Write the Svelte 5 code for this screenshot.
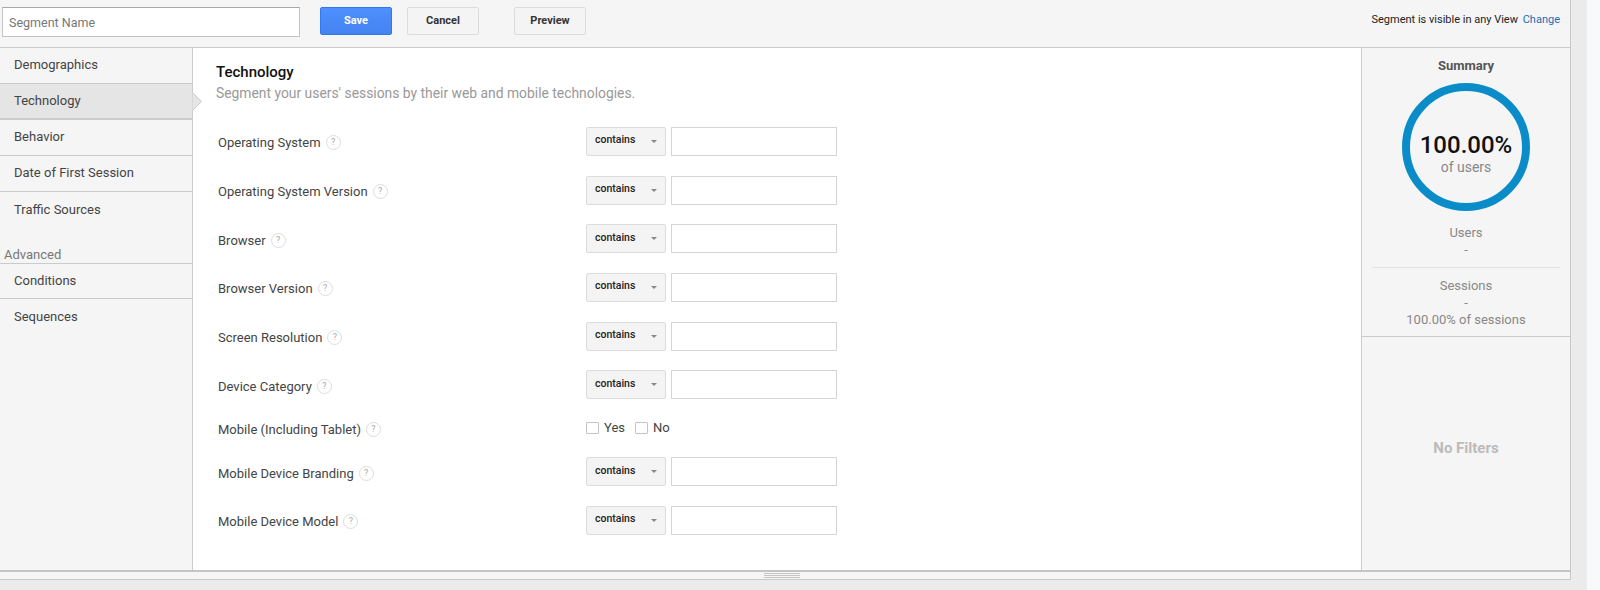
<script>
  const nav = ['Demographics', 'Technology', 'Behavior', 'Date of First Session', 'Traffic Sources'];
  const rows = [
    { label: 'Operating System' },
    { label: 'Operating System Version' },
    { label: 'Browser' },
    { label: 'Browser Version' },
    { label: 'Screen Resolution' },
    { label: 'Device Category' },
    { label: 'Mobile (Including Tablet)', check: true },
    { label: 'Mobile Device Branding' },
    { label: 'Mobile Device Model' }
  ];
</script>

<div class="page">
  <div class="panel">
    <header class="top">
      <input class="name" placeholder="Segment Name" />
      <button class="btn save">Save</button>
      <button class="btn cancel">Cancel</button>
      <button class="btn preview">Preview</button>
      <div class="vis">Segment is visible in any View <a href="#change">Change</a></div>
    </header>
    <div class="body">
      <nav class="side">
        {#each nav as n}
          <div class="item" class:active={n === 'Technology'}>
            {n}
            {#if n === 'Technology'}
              <svg class="arrow" width="12" height="19" viewBox="0 0 12 19"><path d="M1.5 .5 L10.5 9.5 L1.5 18.5 Z" fill="#e5e5e5" stroke="none" /><path d="M1.5 .5 L10.5 9.5 L1.5 18.5" fill="none" stroke="#cbcbcb" /></svg>
            {/if}
          </div>
        {/each}
        <div class="adv">Advanced</div>
        <div class="item first">Conditions</div>
        <div class="item plain">Sequences</div>
      </nav>
      <main class="main">
        <h1>Technology</h1>
        <p class="sub">Segment your users' sessions by their web and mobile technologies.</p>
        <div class="form">
          {#each rows as r}
            <div class="row" class:short={r.check}>
              <div class="label">{r.label} <span class="q">?</span></div>
              {#if r.check}
                <div class="checks">
                  <span class="box"></span><span class="opt">Yes</span>
                  <span class="box"></span><span class="opt">No</span>
                </div>
              {:else}
                <div class="sel">contains<span class="caret"></span></div>
                <div class="val"></div>
              {/if}
            </div>
          {/each}
        </div>
      </main>
      <aside class="summary">
        <div class="stats">
          <div class="s-title">Summary</div>
          <div class="ring">
            <div class="pct">100.00%</div>
            <div class="of">of users</div>
          </div>
          <div class="stat s1">Users<br />-</div>
          <div class="stat s2">Sessions<br />-<br />100.00% of sessions</div>
        </div>
        <div class="nofilters">No Filters</div>
      </aside>
    </div>
    <footer class="strip"><span class="handle"></span></footer>
  </div>
  <div class="gutter"></div>
</div>

<style>
  :global(body) { margin: 0; background: #ebebeb; }
  .page { display: flex; height: 590px; overflow: hidden; font-family: Roboto, "Liberation Sans", sans-serif; font-size: 13px; color: #333; background: #ebebeb; }
  .panel { width: 1570px; height: 580px; box-sizing: content-box; border-right: 1px solid #c8c8c8; background: #f5f5f5; display: flex; flex-direction: column; flex: none; }
  .gutter { width: 16px; flex: none; }
  .page::after { content: ""; flex: 1; background: #f8f9fb; }

  .top { height: 48px; flex: none; box-sizing: border-box; border-bottom: 1px solid #cbcbcb; display: flex; align-items: flex-start; padding: 7px 0 0 2px; }
  .name { height: 28px; box-sizing: content-box; border: 1px solid #c4c4c4; border-top-color: #a8a8a8; padding: 0 4px 0 6px; margin: 0; font: 12.5px Roboto, sans-serif; outline: none; background: #fff; flex: none; width: 286px; }
  .name::placeholder { color: #777; opacity: 1; }
  .btn { height: 28px; width: 72px; box-sizing: border-box; border: 1px solid #dcdcdc; border-radius: 2px; background: #f4f4f4; font: 700 11px Roboto, sans-serif; color: #333; padding: 0 0 2px; flex: none; }
  .save { margin-left: 20px; background: linear-gradient(#4d90fe, #4583f0); border-color: #3079ed; color: #fff; }
  .cancel { margin-left: 15px; }
  .preview { margin-left: 35px; }
  .vis { margin-left: auto; padding: 6px 10px 0 0; font-size: 11px; color: #222; }
  .vis a { color: #1a6fb5; text-decoration: none; margin-left: 2px; }

  .body { flex: 1; display: flex; min-height: 0; }
  .side { width: 192px; flex: none; border-right: 1px solid #cbcbcb; box-sizing: content-box; }
  .item { height: 36px; box-sizing: border-box; border-bottom: 1px solid #cbcbcb; padding: 0 0 2px 14px; display: flex; align-items: center; position: relative; color: #444; font-size: 13px; }
  .item:nth-child(5) { border-bottom: 0; }
  .active { background: #e5e5e5; border-bottom-width: 2px; }
  .arrow { position: absolute; right: -11px; top: 8px; }
  .adv { height: 35px; box-sizing: border-box; padding: 19px 0 0 4px; color: #777; font-size: 13px; line-height: 16px; }
  .first { border-top: 1px solid #cbcbcb; }
  .plain { border-bottom: 0; }

  .main { flex: 1; background: #fff; padding: 14px 0 0 23px; min-width: 0; }
  h1 { margin: 0; font: 500 15px/20px Roboto, sans-serif; color: #111; }
  .sub { margin: 1px 0 0; font-size: 13.86px; line-height: 20px; color: #999; }
  .form { margin-top: 14px; }
  .row { height: 48.7px; display: flex; align-items: center; padding-left: 2px; }
  .short { height: 38.3px; }
  .label { width: 368px; flex: none; display: flex; align-items: center; gap: 5px; color: #444; padding-top: 3px; }
  .q { width: 13px; height: 13px; border: 1px solid #ddd; border-radius: 50%; font-size: 9px; line-height: 13px; text-align: center; color: #aaa; }
  .sel { width: 80px; height: 29px; box-sizing: border-box; background: #f4f4f4; border: 1px solid #dcdcdc; border-radius: 2px; font-weight: 500; font-size: 10.5px; color: #222; padding: 0 0 3px 8px; display: flex; align-items: center; position: relative; }
  .caret { position: absolute; left: 64px; top: 12px; border: 3px solid transparent; border-top: 3px solid #888; border-bottom: 0; }
  .val { width: 166px; height: 29px; box-sizing: border-box; margin-left: 5px; border: 1px solid #d5d5d5; background: #fff; }
  .checks { display: flex; align-items: center; padding-bottom: 1px; }
  .box { width: 13px; height: 12px; box-sizing: border-box; border: 1px solid #c4c4c4; border-radius: 1px; background: #fff; margin-right: 5px; }
  .opt { margin-right: 10px; color: #444; }

  .summary { width: 208px; flex: none; border-left: 1px solid #cbcbcb; display: flex; flex-direction: column; }
  .stats { height: 289px; flex: none; box-sizing: border-box; border-bottom: 1px solid #cbcbcb; padding-top: 9px; text-align: center; }
  .s-title { font: 700 13px/18px Roboto, sans-serif; color: #555; }
  .ring { width: 128px; height: 128px; box-sizing: border-box; border: 8px solid #0a8cc8; border-radius: 50%; margin: 8px auto 0; display: flex; flex-direction: column; justify-content: center; padding-top: 13px; }
  .pct { font: 500 24px/26px Roboto, sans-serif; color: #111; margin: 0 -3px; }
  .of { font-size: 14px; line-height: 18px; color: #888; }
  .stat { color: #888; font-size: 13px; line-height: 17px; margin: 0 10px; }
  .s1 { padding: 13px 0 9px; border-bottom: 1px solid #e3e3e3; }
  .s2 { padding-top: 9px; }
  .nofilters { flex: 1; display: flex; align-items: center; justify-content: center; font: 700 15px Roboto, sans-serif; color: #bbb; padding-bottom: 12px; }

  .strip { height: 7px; flex: none; border-top: 2px solid #c4c4c4; border-bottom: 1px solid #c8c8c8; display: flex; justify-content: center; align-items: center; position: relative; }
  .handle { width: 36px; height: 5px; margin-left: -7px; border-top: 1px solid #c4c4c4; border-bottom: 1px solid #c4c4c4; box-sizing: border-box; background: linear-gradient(#f5f5f5 1px, #c4c4c4 1px, #c4c4c4 2px, #f5f5f5 2px); }
</style>
